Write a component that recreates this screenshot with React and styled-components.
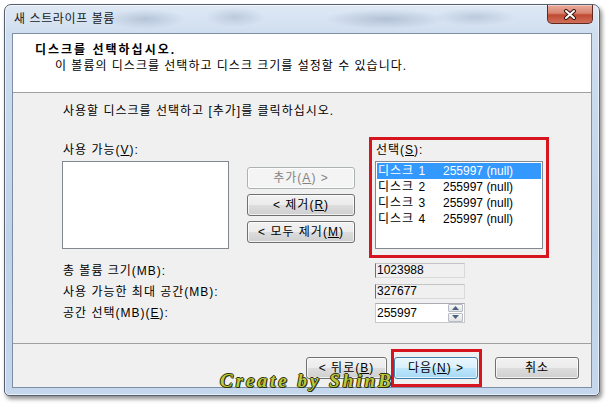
import React from 'react';
import styled, { createGlobalStyle } from 'styled-components';

const Global = createGlobalStyle`
  html, body { margin: 0; padding: 0; background: #fff; }
  body {
    font-family: "Liberation Sans", "Noto Sans CJK KR", sans-serif;
    font-size: 12px;
    color: #000;
  }
  * { box-sizing: border-box; }
`;

const Screen = styled.div`
  position: relative;
  width: 610px;
  height: 405px;
  padding: 4px 0 0 4px;
  background: #fff;
  overflow: hidden;
`;

const Window = styled.div`
  width: 596px;
  height: 392px;
  border: 1px solid #56606e;
  border-radius: 7px 7px 5px 5px;
  background:
    radial-gradient(ellipse 40px 10px at 140px 14px, rgba(120,140,170,.35), transparent),
    radial-gradient(ellipse 30px 10px at 230px 12px, rgba(120,140,170,.3), transparent),
    radial-gradient(ellipse 60px 10px at 380px 14px, rgba(110,130,160,.35), transparent),
    radial-gradient(ellipse 40px 9px at 470px 12px, rgba(120,140,170,.3), transparent),
    linear-gradient(180deg, #dfe9f5 0, #cfdeef 28px, #bed2e9 60%, #c4d7ec 100%);
  box-shadow: 2px 3px 4px rgba(0,0,0,.45), inset 0 0 0 1px rgba(255,255,255,.6);
  display: flex;
  flex-direction: column;
  padding: 0 7px 7px 7px;
`;

const TitleBar = styled.div`
  height: 28px;
  display: flex;
  align-items: flex-start;
  padding-left: 2px;
`;

const TitleText = styled.span`
  margin-top: 6px;
  line-height: 16px;
  color: #1a1a1a;
  letter-spacing: 0.6px;
`;

const CloseButton = styled.div`
  margin-left: auto;
  margin-right: -1px;
  width: 46px;
  height: 19px;
  border: 1px solid #5e2a22;
  border-top: none;
  border-radius: 0 0 5px 5px;
  background: linear-gradient(180deg, #e9aa9a 0, #d98673 45%, #c04a33 55%, #d0705a 100%);
  display: flex;
  align-items: center;
  justify-content: center;
  box-shadow: inset 0 1px 0 rgba(255,255,255,.4);
`;

const Client = styled.div`
  flex: 1;
  display: flex;
  flex-direction: column;
  border: 1px solid #7d8ea5;
  background: #f0f0f0;
  min-height: 0;
`;

const Header = styled.div`
  height: 59px;
  background: #fff;
  border-bottom: 1px solid #a0a0a0;
  padding: 8px 0 0 22px;
`;

const HeaderTitle = styled.div`
  font-weight: bold;
  line-height: 16px;
  letter-spacing: 2px;
`;

const HeaderSub = styled.div`
  line-height: 16px;
  padding-left: 20px;
  letter-spacing: 1px;
`;

const Body = styled.div`
  flex: 1;
  padding: 10px 0 0 49px;
`;

const Instruction = styled.div`
  line-height: 16px;
  padding-left: 1px;
  letter-spacing: 1px;
`;

const Middle = styled.div`
  display: flex;
  align-items: flex-start;
  margin-top: 18px;
`;

const Column = styled.div`
  width: 167px;
  margin-top: 5px;
`;

const FieldLabel = styled.div`
  line-height: 16px;
  padding-left: 1px;
  letter-spacing: 1px;
`;

const ListBox = styled.div`
  margin-top: 3px;
  height: 88px;
  width: ${p => p.$w || 167}px;
  background: #fff;
  border: 1px solid #828790;
  padding: 1px;
`;

const ButtonStack = styled.div`
  display: flex;
  flex-direction: column;
  gap: 5px;
  margin: 30px 0 0 18px;
  width: 108px;
`;

const Button = styled.div`
  height: ${p => p.$h || 22}px;
  width: ${p => p.$w ? p.$w + 'px' : 'auto'};
  border: 1px solid ${p => p.$disabled ? '#adb2b5' : p.$primary ? '#3c7fb1' : '#707070'};
  border-radius: 3px;
  background: ${p => p.$disabled
    ? '#f4f4f4'
    : p.$primary
      ? 'linear-gradient(180deg, #eaf6fd 0, #d9f0fc 50%, #bee6fd 51%, #a7d9f5 100%)'
      : 'linear-gradient(180deg, #f2f2f2 0, #ebebeb 50%, #dddddd 51%, #cfcfcf 100%)'};
  color: ${p => p.$disabled ? '#838383' : '#000'};
  box-shadow: inset 0 0 0 1px rgba(255,255,255,.7);
  display: flex;
  align-items: center;
  justify-content: center;
  line-height: 16px;
  letter-spacing: 1px;
  white-space: nowrap;
`;

const RedFrame = styled.div`
  margin-left: 14px;
  width: 180px;
  border: 3px solid #d7151f;
  padding: 2px 3px 6px 3px;
`;

const Row = styled.div`
  display: flex;
  height: 16px;
  line-height: 16px;
  padding-left: 1px;
  background: ${p => p.$selected ? '#3399ff' : 'transparent'};
  color: ${p => p.$selected ? '#fff' : '#000'};
`;

const Cell = styled.span`
  width: ${p => p.$w}px;
  flex: none;
  letter-spacing: ${p => p.$spaced ? '1px' : '0'};
`;

const InfoGrid = styled.div`
  display: grid;
  grid-template-columns: 313px 90px;
  grid-auto-rows: 21px;
  align-items: center;
  margin-top: 2px;
`;

const InfoLabel = styled.div`
  line-height: 16px;
  padding-left: 1px;
  letter-spacing: 1px;
`;

const ReadOnlyBox = styled.div`
  height: 15px;
  background: #f0f0f0;
  border: 1px solid #d9d9d9;
  border-left-color: #707070;
  border-top-color: #c4c4c4;
  line-height: 13px;
  padding-left: 1px;
`;

const SpinField = styled.div`
  height: 20px;
  background: #fff;
  border: 1px solid #c6c8cc;
  border-top-color: #abadb3;
  display: flex;
  align-items: center;
  padding-left: 1px;
`;

const SpinValue = styled.span`
  flex: 1;
  line-height: 16px;
`;

const Spinner = styled.div`
  width: 15px;
  height: 18px;
  display: flex;
  flex-direction: column;
  gap: 1px;
  margin-right: 1px;
`;

const SpinHalf = styled.div`
  flex: 1;
  border: 1px solid #b6bcc6;
  border-radius: 1px;
  background: linear-gradient(180deg, #f7f7f7, #e2e2e2);
  display: flex;
  align-items: center;
  justify-content: center;
`;

const Footer = styled.div`
  height: 44px;
  border-top: 1px solid #a0a0a0;
  display: flex;
  justify-content: flex-end;
  align-items: flex-start;
  padding: 13px 12px 0 0;
`;

const Highlight = styled.div`
  position: relative;
  margin: 0 17px 0 7px;
  &::after {
    content: "";
    position: absolute;
    top: -8px;
    left: -3px;
    right: -4px;
    bottom: -8px;
    border: 3px solid #d7151f;
    pointer-events: none;
  }
`;

const Watermark = styled.div`
  position: absolute;
  left: 220px;
  top: 370px;
  font-family: "Liberation Serif", serif;
  font-style: italic;
  font-weight: bold;
  font-size: 19px;
  letter-spacing: 3px;
  color: #b9c93a;
  text-shadow: 1px 0 0 #2e3010, -1px 0 0 #2e3010, 0 1px 0 #2e3010, 0 -1px 0 #2e3010, 1px 1px 0 #2e3010;
  white-space: nowrap;
`;

const Tri = ({ up }) => (
  <svg width="7" height="4" viewBox="0 0 7 4">
    <path d={up ? 'M0 4 L3.5 0 L7 4 Z' : 'M0 0 L3.5 4 L7 0 Z'} fill="#4c607f" />
  </svg>
);

const disks = ['1', '2', '3', '4'];

export default function App() {
  return (
    <>
      <Global />
      <Screen>
        <Window>
          <TitleBar>
            <TitleText>새 스트라이프 볼륨</TitleText>
            <CloseButton>
              <svg width="14" height="11" viewBox="0 0 14 11">
                <path d="M3 2 L11 9 M11 2 L3 9" stroke="#3a1610" strokeWidth="4" strokeLinecap="round" />
                <path d="M3 2 L11 9 M11 2 L3 9" stroke="#fff" strokeWidth="2" strokeLinecap="round" />
              </svg>
            </CloseButton>
          </TitleBar>
          <Client>
            <Header>
              <HeaderTitle>디스크를 선택하십시오.</HeaderTitle>
              <HeaderSub>이 볼륨의 디스크를 선택하고 디스크 크기를 설정할 수 있습니다.</HeaderSub>
            </Header>
            <Body>
              <Instruction>사용할 디스크를 선택하고 [추가]를 클릭하십시오.</Instruction>
              <Middle>
                <Column>
                  <FieldLabel>사용 가능(<u>V</u>):</FieldLabel>
                  <ListBox />
                </Column>
                <ButtonStack>
                  <Button $disabled>추가(<u>A</u>) &gt;</Button>
                  <Button>&lt; 제거(<u>R</u>)</Button>
                  <Button>&lt; 모두 제거(<u>M</u>)</Button>
                </ButtonStack>
                <RedFrame>
                  <FieldLabel>선택(<u>S</u>):</FieldLabel>
                  <ListBox $w={168}>
                    {disks.map((d, i) => (
                      <Row key={d} $selected={i === 0}>
                        <Cell $w={65} $spaced>디스크 {d}</Cell>
                        <Cell $w={90}>255997 (null)</Cell>
                      </Row>
                    ))}
                  </ListBox>
                </RedFrame>
              </Middle>
              <InfoGrid>
                <InfoLabel>총 볼륨 크기(MB):</InfoLabel>
                <ReadOnlyBox>1023988</ReadOnlyBox>
                <InfoLabel>사용 가능한 최대 공간(MB):</InfoLabel>
                <ReadOnlyBox>327677</ReadOnlyBox>
                <InfoLabel>공간 선택(MB)(<u>E</u>):</InfoLabel>
                <SpinField>
                  <SpinValue>255997</SpinValue>
                  <Spinner>
                    <SpinHalf><Tri up /></SpinHalf>
                    <SpinHalf><Tri /></SpinHalf>
                  </Spinner>
                </SpinField>
              </InfoGrid>
            </Body>
            <Footer>
              <Button $w={81}>&lt; 뒤로(<u>B</u>)</Button>
              <Highlight>
                <Button $w={84} $primary>다음(<u>N</u>) &gt;</Button>
              </Highlight>
              <Button $w={84}>취소</Button>
            </Footer>
          </Client>
        </Window>
        <Watermark>Create by ShinB</Watermark>
      </Screen>
    </>
  );
}
